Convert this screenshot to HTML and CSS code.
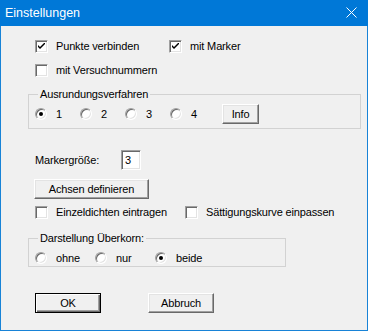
FILE: index.html
```html
<!DOCTYPE html>
<html lang="de">
<head>
    <meta charset="UTF-8">
    <title>Einstellungen</title>
    <link rel="stylesheet" href="styles.css">
</head>
<body>
    <div class="window">
        <div class="titlebar">
            <span class="title">Einstellungen</span>
            <svg class="close" width="11" height="11" viewBox="0 0 11 11">
                <path d="M0.5 0.5 L10.5 10.5 M10.5 0.5 L0.5 10.5" stroke="#fff" stroke-width="1" fill="none"/>
            </svg>
        </div>

        <div class="content">
            <!-- Checkboxes on top -->
            <div class="row first">
                <label class="check col-1">
                    <span class="box"><svg width="7" height="7" viewBox="0 0 7 7"><path d="M0 2 L0 4 L2 6 L7 1 L7 -1 L2 4 Z" fill="#000"/></svg></span>
                    Punkte verbinden
                </label>
                <label class="check">
                    <span class="box"><svg width="7" height="7" viewBox="0 0 7 7"><path d="M0 2 L0 4 L2 6 L7 1 L7 -1 L2 4 Z" fill="#000"/></svg></span>
                    mit Marker
                </label>
            </div>
            <div class="row second">
                <label class="check"><span class="box"></span>mit Versuchnummern</label>
            </div>

            <!-- Ausrundungsverfahren -->
            <fieldset class="group group-wide">
                <legend>Ausrundungsverfahren</legend>
                <div class="radios tall">
                    <label class="radio step-45"><span class="circle on"></span>1</label>
                    <label class="radio step-45"><span class="circle"></span>2</label>
                    <label class="radio step-45"><span class="circle"></span>3</label>
                    <label class="radio step-45"><span class="circle"></span>4</label>
                    <button class="btn info">Info</button>
                </div>
            </fieldset>

            <div class="row marker">
                <span class="marker-label">Markergröße:</span>
                <span class="edit">3</span>
            </div>

            <button class="btn axes">Achsen definieren</button>

            <div class="row third">
                <label class="check col-2"><span class="box"></span>Einzeldichten eintragen</label>
                <label class="check"><span class="box"></span>Sättigungskurve einpassen</label>
            </div>

            <!-- Darstellung Ueberkorn -->
            <fieldset class="group group-narrow">
                <legend>Darstellung Überkorn:</legend>
                <div class="radios">
                    <label class="radio step-60"><span class="circle"></span>ohne</label>
                    <label class="radio step-60"><span class="circle"></span>nur</label>
                    <label class="radio step-60"><span class="circle on"></span>beide</label>
                </div>
            </fieldset>

            <div class="row actions">
                <button class="btn default">OK</button>
                <button class="btn">Abbruch</button>
            </div>
        </div>
    </div>
</body>
</html>
```

FILE: styles.css
```css
/* Styles */
* {
    box-sizing: border-box;
}

body {
    margin: 0;
    padding: 0;
    font-family: "Liberation Sans", Arial, sans-serif;
    font-size: 11px;
    letter-spacing: -0.15px;
    color: #000;
    background-color: #fff;
}

.window {
    width: 368px;
    height: 331px;
    background-color: #f0f0f0;
    border: 1px solid #1883d7;
    border-top: none;
}

.titlebar {
    height: 26px;
    margin: 0 -1px;
    background-color: #0078d7;
    display: flex;
    align-items: center;
    justify-content: space-between;
    padding: 0 11px 1px 5px;
}

.title {
    color: #fff;
    font-family: "Liberation Sans", sans-serif;
    font-size: 12.5px;
    letter-spacing: 0;
}

.close {
    display: block;
}

.content {
    padding: 14px 0 0 34px;
}

.row {
    display: flex;
    align-items: center;
}

.first,
.second,
.third {
    height: 13px;
    line-height: 13px;
}

.second {
    margin-top: 11px;
}

.check,
.radio {
    display: flex;
    align-items: center;
    white-space: nowrap;
}

.col-1 {
    width: 134px;
}

.col-2 {
    width: 150px;
}

.box {
    width: 13px;
    height: 13px;
    margin-right: 8px;
    background-color: #fff;
    border: 1px solid;
    border-color: #a0a0a0 #fff #fff #a0a0a0;
    box-shadow: inset 1px 1px #696969, inset -1px -1px #e3e3e3;
    display: flex;
    align-items: center;
    justify-content: center;
}

.box svg {
    display: block;
}

.circle {
    width: 12px;
    height: 12px;
    margin-right: 9px;
    border-radius: 50%;
    background-color: #fff;
    border: 1px solid;
    border-color: #a0a0a0 #fff #fff #a0a0a0;
    box-shadow: inset 1px 1px #696969, inset -1px -1px #e3e3e3;
    display: flex;
    align-items: center;
    justify-content: center;
}

.circle.on::after {
    content: "";
    width: 4px;
    height: 4px;
    border-radius: 50%;
    background-color: #000;
}

.step-45 {
    width: 45px;
}

.step-60 {
    width: 60px;
}

.group {
    margin: 11px 0 0 -7px;
    padding: 0 0 4px 6px;
    min-width: 0;
    border: 1px solid #d2d2d2;
}

.group legend {
    margin-left: 3px;
    padding: 0 2px;
    line-height: 13px;
}

.group-wide {
    width: 333px;
}

.group-narrow {
    width: 258px;
    margin-top: 13px;
    padding-bottom: 1px;
}

.radios {
    display: flex;
    align-items: center;
    height: 14px;
    margin-top: 6px;
}

.radios.tall {
    height: 20px;
    margin-top: 3px;
}

.btn {
    font-family: inherit;
    font-size: 11px;
    letter-spacing: inherit;
    color: #000;
    height: 20px;
    padding: 0;
    background-color: #f0f0f0;
    border: 1px solid;
    border-color: #fff #696969 #696969 #fff;
    box-shadow: inset -1px -1px #a0a0a0, inset 1px 1px #e3e3e3;
    border-radius: 0;
    width: 66px;
}

.info {
    width: 37px;
    margin-left: 7px;
}

.marker {
    height: 20px;
    margin-top: 21px;
}

.marker-label {
    width: 86px;
}

.edit {
    width: 20px;
    height: 20px;
    background-color: #fff;
    border: 1px solid;
    border-color: #a0a0a0 #fff #fff #a0a0a0;
    box-shadow: inset 1px 1px #696969, inset -1px -1px #e3e3e3;
    padding-left: 3px;
    line-height: 18px;
}

.axes {
    display: block;
    width: 115px;
    margin: 9px 0 0 -1px;
}

.third {
    margin-top: 7px;
}

.actions {
    margin-top: 26px;
    gap: 47px;
}

.btn.default {
    border-color: #000;
    box-shadow: inset 1px 1px #fff, inset -1px -1px #696969, inset -2px -2px #a0a0a0;
}
```
